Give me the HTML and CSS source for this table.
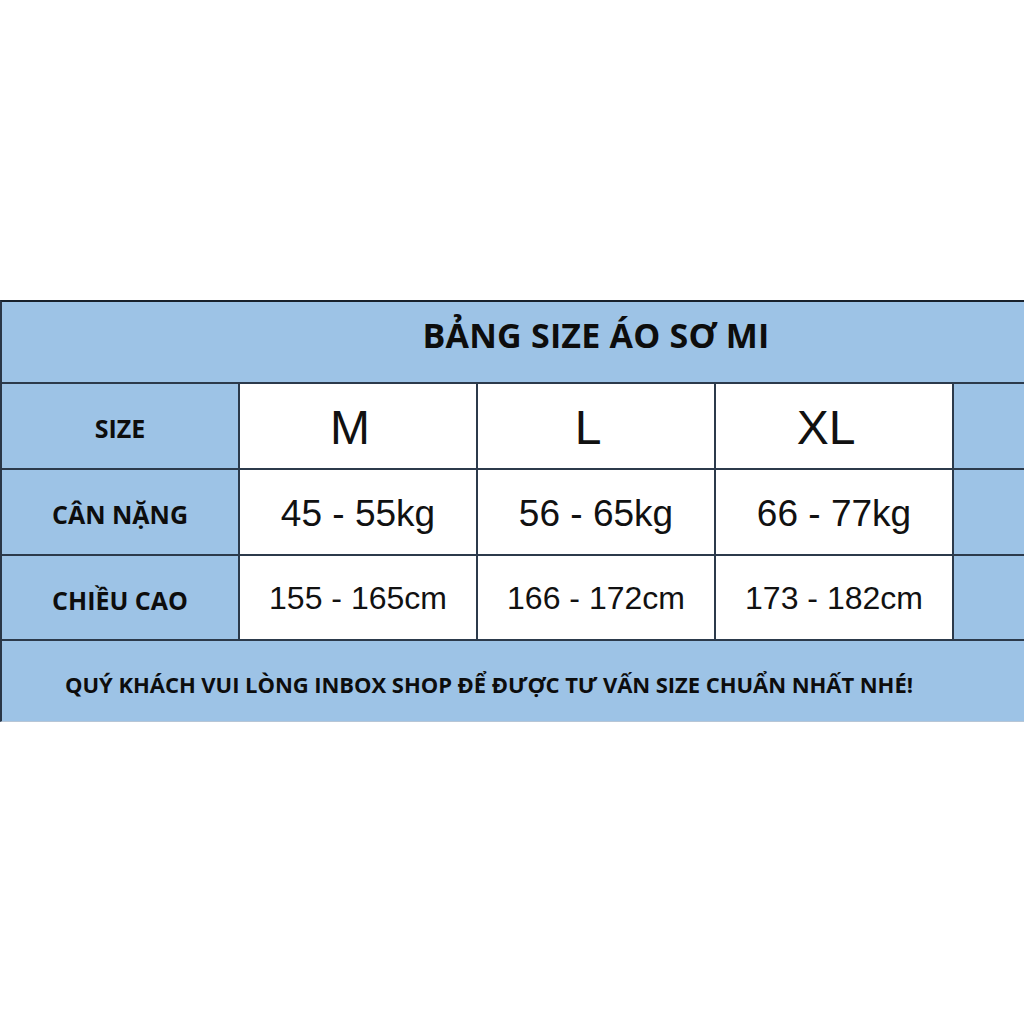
FILE: index.html
```html
<!DOCTYPE html>
<html lang="vi">
<head>
<meta charset="utf-8">
<title>Bảng size áo sơ mi</title>
<link rel="stylesheet" href="styles.css">
</head>
<body>
<div class="page">
  <div class="sheet">
    <div class="title">BẢNG SIZE ÁO SƠ MI</div>
    <div class="grid">
      <div class="label">SIZE</div>
      <div class="cell head">M</div>
      <div class="cell head">L</div>
      <div class="cell head">XL</div>
      <div class="blank"></div>

      <div class="label">CÂN NẶNG</div>
      <div class="cell kg">45 - 55kg</div>
      <div class="cell kg">56 - 65kg</div>
      <div class="cell kg">66 - 77kg</div>
      <div class="blank"></div>

      <div class="label">CHIỀU CAO</div>
      <div class="cell cm">155 - 165cm</div>
      <div class="cell cm">166 - 172cm</div>
      <div class="cell cm">173 - 182cm</div>
      <div class="blank"></div>
    </div>
    <div class="footer">QUÝ KHÁCH VUI LÒNG INBOX SHOP ĐỂ ĐƯỢC TƯ VẤN SIZE CHUẨN NHẤT NHÉ!</div>
  </div>
</div>
</body>
</html>
```

FILE: styles.css
```css
html, body {
  margin: 0;
  padding: 0;
  background: #ffffff;
}

.page {
  width: 1024px;
  height: 1024px;
  padding-top: 300px;
  box-sizing: border-box;
}

.sheet {
  width: 1024px;
  box-sizing: border-box;
  border-top: 2px solid #18212c;
  border-left: 2px solid #2a3646;
  border-bottom: 1px solid #b7c6d6;
  background: #2c3a4b;
  display: flex;
  flex-direction: column;
  gap: 2px;
  font-family: "Open Sans", "Liberation Sans", sans-serif;
  color: #0d0d0d;
}

.title {
  height: 80px;
  background: #9dc3e6;
  display: flex;
  align-items: center;
  justify-content: center;
  padding-left: 166px;
  padding-bottom: 14px;
  box-sizing: border-box;
  font-weight: 700;
  font-size: 34px;
  letter-spacing: 0.2px;
}

.grid {
  display: grid;
  grid-template-columns: 236px 236px 236px 236px 1fr;
  grid-template-rows: 84px 84px 83px;
  gap: 2px;
}

.label {
  background: #9dc3e6;
  display: flex;
  align-items: center;
  justify-content: center;
  font-weight: 700;
  font-size: 25px;
  padding-top: 4px;
  box-sizing: border-box;
}

.blank {
  background: #9dc3e6;
}

.cell {
  background: #ffffff;
  display: flex;
  align-items: center;
  justify-content: center;
  font-family: "Liberation Sans", Arial, sans-serif;
  color: #111111;
  box-sizing: border-box;
}

.head {
  font-size: 48px;
  padding-right: 16px;
  padding-top: 2px;
}

.kg {
  font-size: 37px;
  padding-top: 4px;
}

.cm {
  font-size: 32px;
  padding-top: 2px;
}

.footer {
  height: 80px;
  background: #9dc3e6;
  display: flex;
  align-items: center;
  justify-content: center;
  padding-right: 48px;
  padding-top: 6px;
  box-sizing: border-box;
  font-weight: 700;
  font-size: 22px;
  letter-spacing: -0.05px;
}
```
